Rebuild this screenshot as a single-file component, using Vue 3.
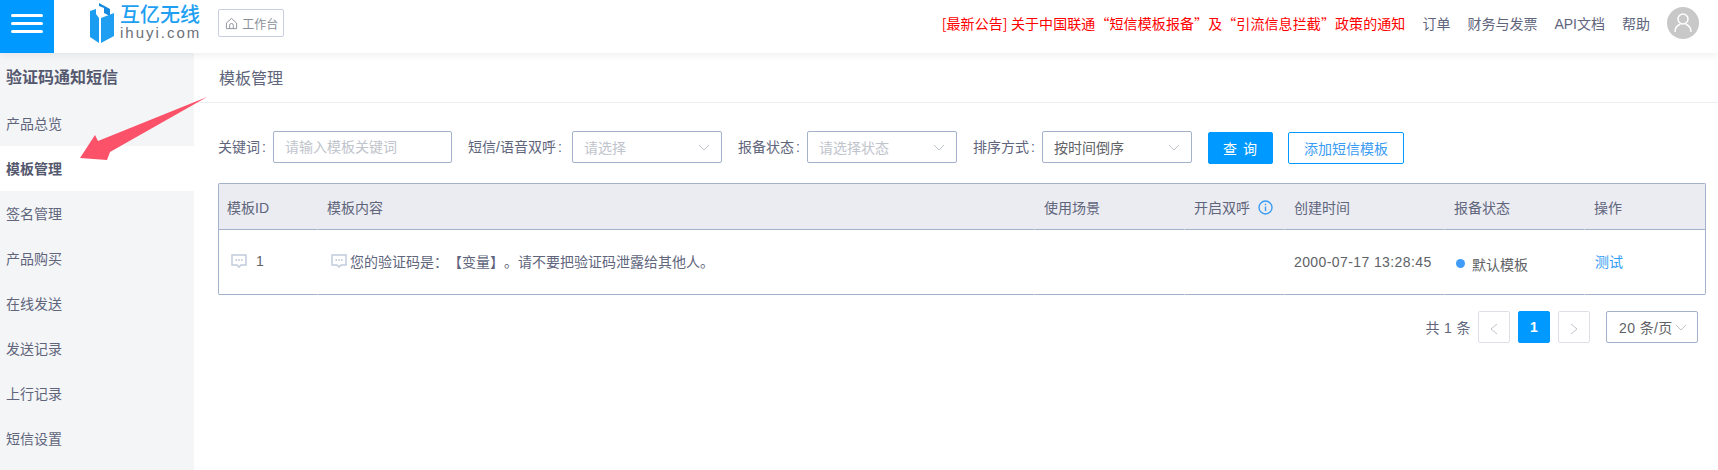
<script setup>
const menu = ['产品总览', '模板管理', '签名管理', '产品购买', '在线发送', '发送记录', '上行记录', '短信设置']
const links = ['订单', '财务与发票', 'API文档', '帮助']
const filters = [
  { label: '短信/语音双呼', cls: 'w-a', value: '请选择', placeholder: true },
  { label: '报备状态', cls: 'w-b', value: '请选择状态', placeholder: true },
  { label: '排序方式', cls: 'w-c', value: '按时间倒序', placeholder: false }
]
</script>

<template>
  <div class="page">
    <header class="topbar">
      <div class="burger"><span></span><span></span><span></span></div>
      <div class="logo">
        <svg class="logo-mark" viewBox="0 0 24 40" width="24" height="40">
          <polygon points="0,8 6,6 6,11 9,15 9,40 0,34" fill="#1a9cf0" />
          <polygon points="9,0 20,6 20,13 14,10 14,5 9,3" fill="#1389e0" />
          <polygon points="11,15 24,10 24,33 11,40" fill="#1f9ff2" />
        </svg>
        <div class="logo-text">
          <div class="logo-cn">互亿无线</div>
          <div class="logo-en">ihuyi.com</div>
        </div>
      </div>
      <div class="workbench">
        <svg viewBox="0 0 14 14" width="13" height="13" fill="none" stroke="#8a8f99" stroke-width="1">
          <path d="M1.5 6.5 7 1.5l5.500 5v6h-11z" />
          <path d="M5 12.500V9a2 2 0 0 1 4 0v3.500" />
        </svg>
        <span>工作台</span>
      </div>
      <nav class="top-right">
        <span class="notice">[最新公告] 关于中国联通“短信模板报备”及“引流信息拦截”政策的通知</span>
        <span v-for="l in links" :key="l" class="top-link">{{ l }}</span>
        <div class="avatar">
          <svg viewBox="0 0 32 32" width="32" height="32" fill="none" stroke="#fff" stroke-width="1.500">
            <circle cx="16" cy="12" r="5" />
            <path d="M8 25c0-5 3-7 5.500-8M24 25c0-5-3-7-5.500-8" />
          </svg>
        </div>
      </nav>
    </header>

    <div class="body">
      <aside class="sidebar">
        <div class="side-title">验证码通知短信</div>
        <div v-for="m in menu" :key="m" class="side-item" :class="{ active: m === '模板管理' }">{{ m }}</div>
      </aside>

      <main class="content">
        <div class="crumb">模板管理</div>
        <div class="panel">
          <div class="filters">
            <label class="f-label w-k">关键词<span class="colon">:</span></label>
            <input class="f-input" placeholder="请输入模板关键词" />
            <template v-for="f in filters" :key="f.label">
              <label class="f-label" :class="'l-' + f.cls">{{ f.label }}<span class="colon">:</span></label>
              <div class="f-select" :class="[f.cls, { ph: f.placeholder }]">
                <span>{{ f.value }}</span>
                <svg viewBox="0 0 12 7" width="12" height="7" fill="none" stroke="#c0c4cc" stroke-width="1"><path d="M1 1l5 5 5-5" /></svg>
              </div>
            </template>
            <button class="btn primary">查 询</button>
            <button class="btn outline">添加短信模板</button>
          </div>

          <div class="table">
            <div class="tr thead">
              <div class="cell first">模板ID</div>
              <div class="cell">模板内容</div>
              <div class="cell">使用场景</div>
              <div class="cell">开启双呼
                <svg class="info" viewBox="0 0 15 15" width="15" height="15" fill="none" stroke="#3a9cf5" stroke-width="1.400">
                  <circle cx="7.500" cy="7.500" r="6.500" />
                  <path d="M7.500 6.500v4.500M7.500 3.700v1.500" />
                </svg>
              </div>
              <div class="cell">创建时间</div>
              <div class="cell">报备状态</div>
              <div class="cell">操作</div>
            </div>
            <div class="tr tbody">
              <div class="cell">
                <svg class="msg" viewBox="0 0 16 14" width="16" height="14" fill="none" stroke="#c0cbdc" stroke-width="1.500">
                  <path d="M1 1h14v10H10l-2 2-2-2H1z" />
                  <path d="M4.500 6h1.500M7.300 6h1.500M10 6h1.500" stroke="#8f9cb3" stroke-width="1" />
                </svg>
                <span class="num">1</span>
              </div>
              <div class="cell">
                <svg class="msg wide" viewBox="0 0 16 14" width="16" height="14" fill="none" stroke="#c0cbdc" stroke-width="1.500">
                  <path d="M1 1h14v10H10l-2 2-2-2H1z" />
                  <path d="M4.500 6h1.500M7.300 6h1.500M10 6h1.500" stroke="#8f9cb3" stroke-width="1" />
                </svg>
                <span class="msg-text">您的验证码是：【变量】。请不要把验证码泄露给其他人。</span>
              </div>
              <div class="cell"></div>
              <div class="cell"></div>
              <div class="cell date">2000-07-17 13:28:45</div>
              <div class="cell status"><i class="dot"></i>默认模板</div>
              <div class="cell link">测试</div>
            </div>
          </div>

          <div class="pager">
            <span class="total">共 1 条</span>
            <div class="pg">
              <svg class="chev" viewBox="0 0 8 12" width="8" height="12" fill="none" stroke="#c0c4cc" stroke-width="1"><path d="M7 1 1 6l6 5" /></svg>
            </div>
            <div class="pg current">1</div>
            <div class="pg">
              <svg class="chev" viewBox="0 0 8 12" width="8" height="12" fill="none" stroke="#c0c4cc" stroke-width="1"><path d="m1 1 6 5-6 5" /></svg>
            </div>
            <div class="size">
              <span>20 条/页</span>
              <svg viewBox="0 0 12 7" width="12" height="7" fill="none" stroke="#c0c4cc" stroke-width="1"><path d="M1 1l5 5 5-5" /></svg>
            </div>
          </div>
        </div>
      </main>
    </div>

    <svg class="arrow" viewBox="0 0 140 70" width="140" height="70">
      <polygon points="10,61 25,38 28,44 137,0 40,55 37,63" fill="#fb5269" />
    </svg>
  </div>
</template>

<style>
html, body { margin: 0; background: #fff; }
</style>

<style scoped>
.page {
  position: relative;
  width: 1718px;
  height: 470px;
  overflow: hidden;
  font-family: "Liberation Sans", "Noto Sans CJK SC", sans-serif;
  font-size: 14px;
  color: #60657c;
  text-spacing-trim: space-all;
}
.topbar {
  position: relative;
  z-index: 2;
  box-sizing: border-box;
  display: flex;
  align-items: center;
  height: 53px;
  padding-bottom: 7px;
  background: #fff;
  box-shadow: 0 2px 8px rgba(0, 0, 0, 0.07);
}
.burger {
  align-self: flex-start;
  flex: none;
  box-sizing: border-box;
  width: 54px;
  height: 53px;
  padding: 14px 11px 0;
  background: #0099ff;
  display: flex;
  flex-direction: column;
  gap: 5px;
}
.burger span {
  display: block;
  height: 3px;
  border-radius: 2px;
  background: #fff;
}
.logo {
  display: flex;
  align-items: center;
  margin-left: 36px;
  gap: 6px;
}
.logo-mark { display: block; }
.logo-cn {
  font-size: 20px;
  line-height: 20px;
  font-weight: 500;
  color: #1f9ff2;
}
.logo-en {
  font-size: 15px;
  line-height: 16px;
  letter-spacing: 2px;
  color: #6c7078;
}
.workbench {
  display: flex;
  align-items: center;
  gap: 4px;
  box-sizing: border-box;
  margin-left: 17px;
  height: 28px;
  width: 66px;
  padding-left: 6px;
  border: 1px solid #c9cfe0;
  border-radius: 2px;
  font-size: 12px;
  color: #8a8f99;
}
.top-right {
  margin-left: auto;
  display: flex;
  align-items: center;
  gap: 17px;
  padding-right: 19px;
}
.notice {
  color: #f00;
  font-family: "Noto Sans CJK SC", sans-serif;
  letter-spacing: 0.09px;
}
.top-link { color: #60657c; }
.avatar {
  width: 32px;
  height: 32px;
  border-radius: 50%;
  background: #c8c8c8;
}
.avatar svg { display: block; }
.body { display: flex; height: 417px; }
.sidebar {
  width: 194px;
  flex: none;
  background: #f4f5f7;
}
.side-title {
  height: 48px;
  line-height: 50px;
  padding-left: 6px;
  font-size: 16px;
  font-weight: 700;
  color: #54586e;
}
.side-item {
  height: 45px;
  line-height: 46px;
  padding-left: 6px;
}
.side-item.active {
  background: #fff;
  font-weight: 700;
  color: #54586e;
}
.content { flex: 1; min-width: 0; }
.crumb {
  box-sizing: border-box;
  height: 50px;
  line-height: 51px;
  padding-left: 25px;
  font-size: 16px;
  border-bottom: 1px solid #eceef2;
}
.panel { padding: 28px 12px 0 24px; }
.filters {
  display: flex;
  align-items: flex-start;
  height: 52px;
}
.f-label { line-height: 32px; white-space: nowrap; }
.colon { margin-left: 2px; }
.w-k { width: 55px; }
.l-w-a { width: 104px; margin-left: 16px; }
.l-w-b { width: 69px; margin-left: 16px; }
.l-w-c { width: 69px; margin-left: 16px; }
.f-input,
.f-select {
  box-sizing: border-box;
  height: 32px;
  border: 1px solid #a3b1cb;
  border-radius: 2px;
  background: #fff;
  font-family: inherit;
  font-size: 14px;
  color: #606266;
}
.f-input {
  width: 179px;
  padding: 0 11px;
  outline: none;
}
.f-input::placeholder { color: #c0c4cc; opacity: 1; }
.f-select {
  display: flex;
  align-items: center;
  justify-content: space-between;
  padding: 0 11px;
}
.f-select.ph { color: #c0c4cc; }
.w-a { width: 150px; }
.w-b { width: 150px; }
.w-c { width: 150px; }
.btn {
  box-sizing: border-box;
  height: 32px;
  margin-top: 1px;
  border-radius: 2px;
  font-family: inherit;
  font-size: 14px;
  padding: 0;
}
.primary {
  width: 65px;
  margin-left: 16px;
  border: 1px solid #0099ff;
  background: #0099ff;
  color: #fff;
  letter-spacing: 1px;
}
.outline {
  width: 116px;
  margin-left: 15px;
  border: 1px solid #0099ff;
  background: #fff;
  color: #3a9cf5;
}
.table {
  border: 1px solid #a3b1cb;
  border-bottom: 0;
  border-radius: 2px;
}
.tr {
  display: grid;
  grid-template-columns: 99px 717px 150px 100px 160px 140px 1fr;
}
.cell {
  box-sizing: border-box;
  display: flex;
  align-items: center;
  padding: 0 9px;
  border-bottom: 1px solid #a3b1cb;
  border-right: 1px solid transparent;
}
.thead { background: #ebecf1; }
.thead .cell { height: 46px; border-right-color: #ebecf1; }
.thead .cell:last-child { border-right: 0; }
.thead .first { padding-left: 8px; }
.tbody .cell { height: 65px; border-right-color: #fff; padding-bottom: 2px; color: #606266; }
.tbody .cell:last-child { border-right: 0; }
.info { margin: 1px 0 0 8px; }
.msg { margin-left: 3px; flex: none; }
.msg.wide { margin-left: 4px; }
.num { margin-left: 9px; }
.msg-text { margin-left: 3px; color: #60657c; }
.tbody .date { letter-spacing: 0.4px; padding-bottom: 0; }
.status { padding-top: 5px; }
.dot {
  width: 9px;
  height: 9px;
  border-radius: 50%;
  background: #3f9cf8;
  margin: 0 7px 0 2px;
}
.tbody .link { color: #2f9bf5; padding-left: 10px; }
.pager {
  display: flex;
  align-items: center;
  justify-content: flex-end;
  gap: 8px;
  margin-top: 16px;
  padding-right: 8px;
}
.total { letter-spacing: 0.4px; margin-right: -1px; }
.pg {
  box-sizing: border-box;
  width: 32px;
  height: 32px;
  display: flex;
  align-items: center;
  justify-content: center;
  border: 1px solid #dcdfe6;
  border-radius: 2px;
}
.chev { margin-top: 3px; }
.pg.current {
  background: #0099ff;
  border-color: #0099ff;
  color: #fff;
  font-weight: 700;
}
.size {
  box-sizing: border-box;
  width: 92px;
  height: 32px;
  margin-left: 8px;
  display: flex;
  align-items: center;
  gap: 2px;
  padding: 0 7px 0 12px;
  border: 1px solid #a3b1cb;
  border-radius: 2px;
  color: #606266;
  letter-spacing: 0.4px;
}
.arrow {
  position: absolute;
  z-index: 3;
  left: 70px;
  top: 97px;
  display: block;
}
</style>
